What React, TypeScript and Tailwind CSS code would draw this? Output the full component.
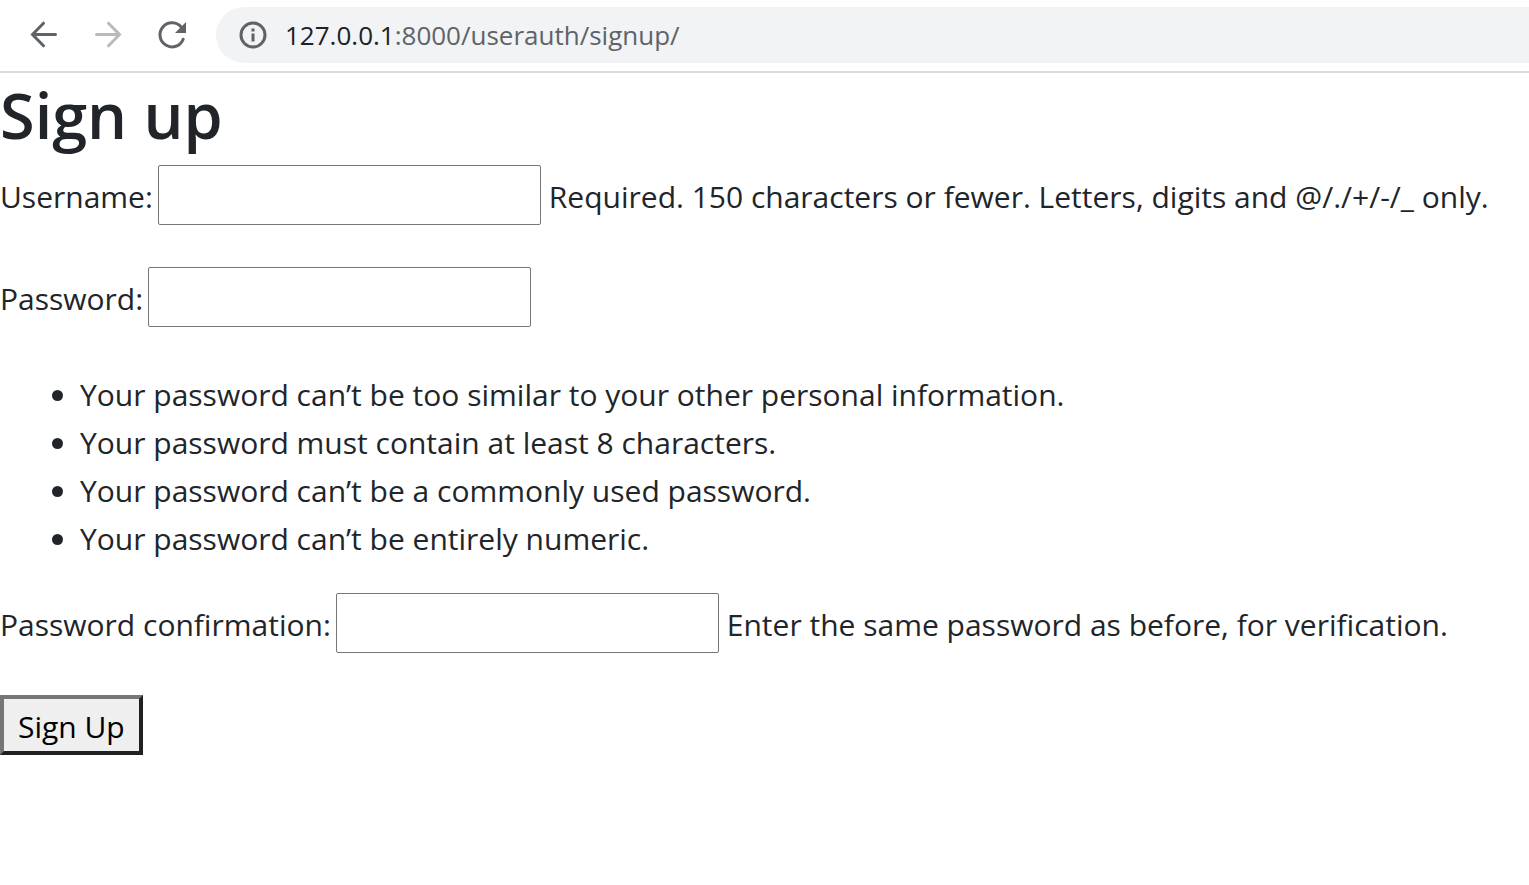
import type { ReactNode } from 'react'

const rules = [
  'Your password can’t be too similar to your other personal information.',
  'Your password must contain at least 8 characters.',
  'Your password can’t be a commonly used password.',
  'Your password can’t be entirely numeric.',
]

function Icon({ children }: { children: ReactNode }) {
  return (
    <svg viewBox="0 0 32 32" className="size-8 shrink-0" fill="none" stroke="currentColor" strokeWidth="3" aria-hidden="true">
      {children}
    </svg>
  )
}

function BrowserBar() {
  return (
    <header className="flex h-[73px] items-center border-b-2 border-[#d9dbdc] pb-px pl-7 text-[#5f6368]">
      <nav className="flex shrink-0 gap-8">
        <button type="button" aria-label="Back">
          <Icon>
            <path d="M27.500 15.500H5M15.500 4.200L4.500 15.500L15.500 26.800" strokeLinecap="round" />
          </Icon>
        </button>
        <button type="button" aria-label="Forward" disabled className="text-[#bababa]">
          <Icon>
            <path d="M4.500 15.500H27M16.500 4.200L27.500 15.500L16.500 26.800" strokeLinecap="round" />
          </Icon>
        </button>
        <button type="button" aria-label="Reload">
          <Icon>
            <path d="M25.500 8.500A12 12 0 1 0 27.200 20.200" strokeLinecap="round" />
            <path d="M30 3V14H19Z" fill="currentColor" stroke="none" />
          </Icon>
        </button>
      </nav>
      <div className="ml-7 flex h-14 min-w-0 grow items-center gap-4 rounded-l-full bg-[#f1f3f4] pl-[21px]">
        <Icon>
          <circle cx="16" cy="16" r="12" />
          <path d="M16 14.500V22.500M16 9.500V12.500" />
        </Icon>
        <p className="truncate text-[26px] leading-10">
          <span className="text-[#202124]">127.0.0.1</span>:8000/userauth/signup/
        </p>
      </div>
    </header>
  )
}

function Field({ id, label, type, help }: { id: string; label: string; type: string; help?: string }) {
  return (
    <div className="flex items-center">
      <label htmlFor={id} className="shrink-0 pt-1 pr-[5px]">
        {label}
      </label>
      <input id={id} type={type} className="h-[60px] w-[383px] shrink-0 rounded-xs border border-[#767676] bg-white px-1" />
      {help && <span className="pt-1 pl-2 whitespace-nowrap">{help}</span>}
    </div>
  )
}

export default function App() {
  return (
    <div className="min-h-screen overflow-x-hidden bg-white font-['Open_Sans',sans-serif] text-[30px] leading-[48px] text-[#212529]">
      <BrowserBar />
      <main>
        <h1 className="mb-3 pt-1 text-[63px] leading-[76px] font-semibold">Sign up</h1>
        <form className="flex flex-col items-start" onSubmit={(e) => e.preventDefault()}>
          <Field id="username" label="Username:" type="text" help="Required. 150 characters or fewer. Letters, digits and @/./+/-/_ only." />
          <div className="mt-[42px]">
            <Field id="password1" label="Password:" type="password" />
          </div>
          <ul className="mt-11 mb-[30px] list-disc pl-20">
            {rules.map((rule) => (
              <li key={rule}>{rule}</li>
            ))}
          </ul>
          <Field id="password2" label="Password confirmation:" type="password" help="Enter the same password as before, for verification." />
          <button
            type="submit"
            className="mt-[42px] h-[60px] border-4 border-t-[#767676] border-r-[#212121] border-b-[#212121] border-l-[#767676] bg-[#efefef] px-[14px] pt-1 text-black"
          >
            Sign Up
          </button>
        </form>
      </main>
    </div>
  )
}
